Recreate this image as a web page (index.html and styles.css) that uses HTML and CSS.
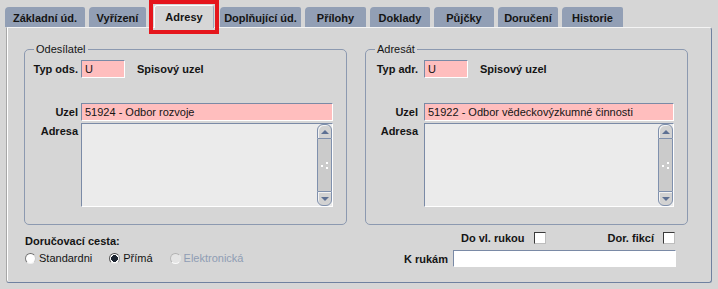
FILE: index.html
```html
<!DOCTYPE html>
<html lang="cs">
<head>
<meta charset="utf-8">
<title>Adresy</title>
<link rel="stylesheet" href="styles.css">
</head>
<body>
<div class="screen">
  <nav class="tabs">
    <div class="tab t1">Základní úd.</div>
    <div class="tab t2">Vyřízení</div>
    <div class="tab active">Adresy<span class="highlight"></span></div>
    <div class="tab t4">Doplňující úd.</div>
    <div class="tab t5">Přílohy</div>
    <div class="tab t6">Doklady</div>
    <div class="tab t7">Půjčky</div>
    <div class="tab t8">Doručení</div>
    <div class="tab t9">Historie</div>
  </nav>
  <section class="panel">
    <div class="groups">
      <fieldset class="group">
        <legend>Odesílatel</legend>
        <div class="form">
          <span class="lbl">Typ ods.</span>
          <div class="typ"><span class="field pink short">U</span><span class="lbl">Spisový uzel</span></div>
          <span class="lbl row2">Uzel</span>
          <div class="field pink row2">51924 - Odbor rozvoje</div>
          <span class="lbl top">Adresa</span>
          <div class="textarea">
            <div class="area"></div>
            <div class="scrollbar">
              <div class="sb-btn up"><span class="arrow-up"></span></div>
              <div class="sb-track"><span class="grip"></span></div>
              <div class="sb-btn down"><span class="arrow-down"></span></div>
            </div>
          </div>
        </div>
      </fieldset>
      <fieldset class="group">
        <legend>Adresát</legend>
        <div class="form recipient">
          <span class="lbl">Typ adr.</span>
          <div class="typ"><span class="field pink short">U</span><span class="lbl">Spisový uzel</span></div>
          <span class="lbl row2">Uzel</span>
          <div class="field pink row2">51922 - Odbor vědeckovýzkumné činnosti</div>
          <span class="lbl top">Adresa</span>
          <div class="textarea">
            <div class="area"></div>
            <div class="scrollbar">
              <div class="sb-btn up"><span class="arrow-up"></span></div>
              <div class="sb-track"><span class="grip"></span></div>
              <div class="sb-btn down"><span class="arrow-down"></span></div>
            </div>
          </div>
        </div>
      </fieldset>
    </div>
    <div class="bottom">
      <div class="delivery">
        <div class="lbl">Doručovací cesta:</div>
        <div class="radios">
          <label class="radio"><span class="dot"></span>Standardni</label>
          <label class="radio"><span class="dot checked"></span>Přímá</label>
          <label class="radio disabled"><span class="dot"></span>Elektronická</label>
        </div>
      </div>
      <div class="options">
        <div class="checks">
          <span class="check-item first"><span class="lbl">Do vl. rukou</span><span class="box"></span></span>
          <span class="check-item"><span class="lbl">Dor. fikcí</span><span class="box"></span></span>
        </div>
        <div class="hands">
          <span class="lbl">K rukám</span>
          <div class="field white"></div>
        </div>
      </div>
    </div>
  </section>
</div>
</body>
</html>
```
FILE: styles.css
```css
* { box-sizing: border-box; }
html, body { margin: 0; padding: 0; }
body {
  background: #d6d6d6;
  font-family: "Liberation Sans", Arial, sans-serif;
  font-size: 11px;
  color: #141414;
  width: 718px;
  height: 289px;
  overflow: hidden;
}
.screen { padding-top: 7px; }

/* tabs */
.tabs {
  display: flex;
  align-items: flex-end;
  gap: 4px;
  padding-left: 5px;
  height: 20px;
  position: relative;
  z-index: 2;
}
.tab {
  height: 20px;
  background: #929fb5;
  border-radius: 4px 2px 0 0;
  font-weight: bold;
  display: flex;
  align-items: center;
  justify-content: center;
  color: #141414;
  padding-top: 1px;
}
.t1 { width: 80px; }
.t2 { width: 57px; }
.t4 { width: 81px; }
.t5 { width: 61px; }
.t6, .t7, .t8 { width: 60px; }
.t9 { width: 61px; }
.tab.active {
  position: relative;
  width: 60px;
  height: 23px;
  margin: 0 2px -1px 4px;
  background: #d6d6d6;
  border-top: 1px solid #fff;
  border-left: 1px solid #fff;
  border-right: 1px solid #9aa6ba;
  border-radius: 3px 3px 0 0;
  padding-top: 0;
}
.highlight {
  position: absolute;
  left: -6px;
  right: -6px;
  top: -6px;
  bottom: -6px;
  border: 4px solid #e5161c;
}

/* panel */
.panel {
  margin-left: 6px;
  width: 706px;
  height: 256px;
  border: 1px solid;
  border-color: #f4f4f4 #6f81a0 #6f81a0 #a7a7a7;
  box-shadow: inset 1px 0 0 #fff;
  border-radius: 0 3px 3px 3px;
  padding: 15px 0 0 17px;
}
.groups {
  display: grid;
  grid-template-columns: 323px 323px;
  column-gap: 18px;
}
.group {
  margin: 0;
  border: 1px solid #8c99b0;
  border-radius: 5px;
  padding: 4px 13px 17px 0;
  min-width: 0;
}
.group legend {
  padding: 0 2px;
  margin-left: 9px;
  line-height: 13px;
  color: #141414;
}
.form {
  display: grid;
  grid-template-columns: 53px 1fr;
  column-gap: 3px;
  align-items: center;
}
.form.recipient {
  grid-template-columns: 52px 1fr;
  column-gap: 6px;
}
.lbl {
  font-weight: bold;
  white-space: nowrap;
}
.form > .lbl { text-align: right; }
.form > .lbl.top { align-self: start; margin-top: 4px; }
.typ {
  display: flex;
  align-items: center;
  gap: 12px;
}
.row2 { margin-top: 25px; }
.field {
  height: 18px;
  line-height: 16px;
  padding-left: 3px;
  border: 1px solid;
  border-color: #7a8aa6 #fff #fff #7a8aa6;
  white-space: nowrap;
  overflow: hidden;
}
.pink { background: #ffbebe; }
.white { background: #fff; }
.short { width: 44px; }

.textarea {
  margin-top: 2px;
  height: 84px;
  display: flex;
  border: 1px solid;
  border-color: #7a8aa6 #fff #fff #7a8aa6;
  background: #ebebeb;
}
.area { flex: 1; }
.scrollbar {
  width: 15px;
  display: flex;
  flex-direction: column;
}
.sb-btn {
  height: 15px;
  border: 1px solid #7f90ad;
  background: #d2d2d2;
  box-shadow: inset 1px 1px 0 #f2f2f2;
  display: flex;
  align-items: center;
  justify-content: center;
}
.sb-btn.up { border-radius: 6px 6px 0 0; }
.sb-btn.down { border-radius: 0 0 6px 6px; }
.arrow-up, .arrow-down {
  width: 0;
  height: 0;
  border-left: 4px solid transparent;
  border-right: 4px solid transparent;
}
.arrow-up { border-bottom: 4px solid #5d7093; }
.arrow-down { border-top: 4px solid #5d7093; }
.sb-track {
  flex: 1;
  background: #cbcbcb;
  border-left: 1px solid #7f90ad;
  border-right: 1px solid #7f90ad;
  display: flex;
  align-items: center;
  justify-content: center;
}
.grip {
  position: relative;
  width: 7px;
  height: 7px;
  background:
    radial-gradient(circle, #fff 0 1px, transparent 1.2px) 5px 0 / 2px 2px no-repeat,
    radial-gradient(circle, #fff 0 1px, transparent 1.2px) 0 3px / 2px 2px no-repeat,
    radial-gradient(circle, #fff 0 1px, transparent 1.2px) 5px 5px / 2px 2px no-repeat;
}

/* bottom */
.bottom {
  display: grid;
  grid-template-columns: 323px 323px;
  column-gap: 18px;
}
.delivery { padding: 9px 0 0 1px; }
.delivery .lbl { line-height: 14px; }
.radios {
  margin-top: 3px;
  display: flex;
  align-items: center;
  gap: 17px;
  height: 14px;
}
.radio {
  display: flex;
  align-items: center;
  gap: 3px;
  color: #141414;
}
.radio.disabled { color: #8f9db4; }
.dot {
  width: 11px;
  height: 11px;
  border-radius: 50%;
  background: #fff;
  border: 1px solid;
  border-color: #6b6b6b #c9c9c9 #f0f0f0 #7d7d7d;
}
.dot.checked {
  background: radial-gradient(circle, #1c2430 0 3.2px, #fff 3.6px);
  border-color: #4a4a4a #9a9a9a #e0e0e0 #5a5a5a;
}
.radio.disabled .dot {
  background: #e4e4e4;
  border-color: #b0b0b0 #e6e6e6 #fafafa #b8b8b8;
}
.options { padding: 6px 12px 0 0; }
.checks {
  display: flex;
  justify-content: flex-end;
  align-items: center;
  height: 14px;
  padding-right: 1px;
}
.check-item {
  display: flex;
  align-items: center;
  gap: 9px;
}
.check-item.first { margin-right: 62px; }
.box {
  width: 12px;
  height: 12px;
  background: #fff;
  border: 1px solid;
  border-color: #3a3a3a #bdbdbd #bdbdbd #3a3a3a;
}
.hands {
  margin-top: 5px;
  display: flex;
  justify-content: flex-end;
  align-items: center;
  gap: 5px;
}
.hands .field { width: 223px; height: 17px; }
```
